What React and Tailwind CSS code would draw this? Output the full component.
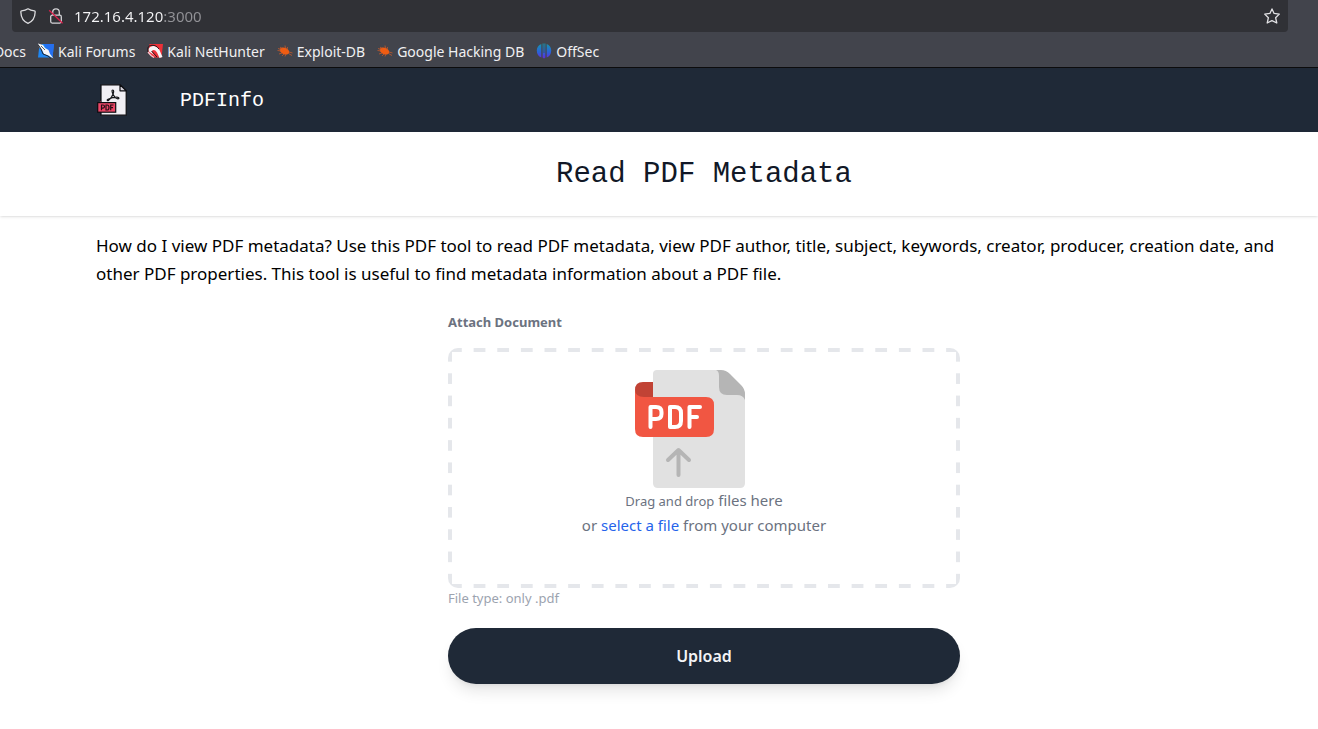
import React from "react";

function ShieldIcon() {
  return (
    <svg className="size-4" viewBox="0 0 16 16" fill="none" stroke="#dcdcdf" strokeWidth="1.3" strokeLinejoin="round">
      <path d="M8 .8C6.300 2 4 2.700 1.600 2.900C1 3 .8 3.300.8 3.800C1 9.500 3 13.500 8 15.300C13 13.500 15 9.500 15.200 3.800C15.200 3.300 15 3 14.400 2.900C12 2.700 9.700 2 8 .8Z" />
    </svg>
  );
}

function InsecureLockIcon() {
  return (
    <svg className="size-4" viewBox="0 0 16 16" fill="none">
      <rect x="2.700" y="7.200" width="10.600" height="7.900" rx="1.500" stroke="#d4d4d7" strokeWidth="1.300" />
      <path d="M4.700 7V4.200a3.300 3.300 0 0 1 6.600 0V7" stroke="#d4d4d7" strokeWidth="1.300" />
      <path d="M1.200 2.300L14.600 15.200" stroke="#d81f4a" strokeWidth="1.300" />
    </svg>
  );
}

function StarIcon() {
  return (
    <svg className="size-4" viewBox="0 0 16 16" fill="none" stroke="#e2e2e5" strokeWidth="1.300" strokeLinejoin="round">
      <path d="M8 .9L10.100 5.400L15.300 6.100L11.600 9.700L12.800 15L8 12.600L3.200 15L4.400 9.700L.7 6.100L5.900 5.400Z" />
    </svg>
  );
}

function ForumsIcon() {
  return (
    <svg className="size-4" viewBox="0 0 16 16">
      <path d="M4 1H16L14.500 14.500H0L1 6Z" fill="#1f87f2" />
      <path d="M6 1H16L14.500 14.500Z" fill="#256ff0" />
      <path d="M0 .5L5 2L7 5L10.500 7L12 11L15.500 15.500L10.500 12.500L6 11L4 7L1 4Z" fill="#f5f5f7" />
      <path d="M0 1.500L3 6L5 11L10 13L13 15.500" fill="none" stroke="#1d2530" strokeWidth="1" />
      <path d="M3 3L7 7" stroke="#33363c" strokeWidth=".8" />
    </svg>
  );
}

function NetHunterIcon() {
  return (
    <svg className="size-4" viewBox="0 0 16 16">
      <path d="M2.500 1H16L14.500 14.500H6L1 10Z" fill="#ee3038" />
      <path d="M9 13.500L2 8.500Q.5 4.500 5 3.200Q9.500 2.500 12.500 7L15.500 14L12.500 15L10 9.500Q7.500 6 5.200 7.600Q4 10 9 13.500Z" fill="#f6f4f5" />
      <path d="M1 9C0 5 1 2.500 5 2.300C8 2 10 3.500 12 6M4.500 8L10 14" fill="none" stroke="#24161b" strokeWidth="1" />
      <path d="M1 9L4 12.500L7 14.500" fill="none" stroke="#f4c6ce" strokeWidth="1.300" />
    </svg>
  );
}

function BugIcon() {
  return (
    <svg className="size-4" viewBox="0 0 16 16">
      <ellipse cx="7.500" cy="8" rx="5" ry="3.200" transform="rotate(24 7.500 8)" fill="#ef5c12" />
      <path d="M3 4L5.500 6M1 5.500L4 6.500M.5 7.500L4 8M2 11L5 10M5 13L7 11M8 13.500L9 11M8 2.500L8.500 5.500M10.500 4L10 7M12 9L15.500 10M11.500 10.500L15 12.500" stroke="#c4592b" strokeWidth=".8" />
    </svg>
  );
}

function OffSecIcon() {
  return (
    <svg className="size-4" viewBox="0 0 16 16">
      <defs>
        <linearGradient id="offsec" gradientUnits="userSpaceOnUse" x1="0" y1="0" x2="0" y2="16">
          <stop offset="0" stopColor="#159aa8" />
          <stop offset=".55" stopColor="#2864d8" />
          <stop offset="1" stopColor="#6728e0" />
        </linearGradient>
      </defs>
      <path d="M5.300 1V14.500C2.500 13.500.8 11 .8 7.500C.8 4.500 2.500 1.800 5.300 1Z" fill="url(#offsec)" />
      <path d="M10.700 1V14.500C13.500 13.500 15.200 11 15.200 7.500C15.200 4.500 13.500 1.800 10.700 1Z" fill="url(#offsec)" />
      <path d="M6.600 .5H7.600V15L6.600 14.500ZM8.400 .5H9.400V14.500L8.400 15ZM7.600 10H8.400V15.500H7.600Z" fill="url(#offsec)" />
    </svg>
  );
}

function PdfLogo() {
  return (
    <svg className="size-8" viewBox="0 0 32 32">
      <path d="M5 .8H24L30.200 7V31.200H5Z" fill="#f1eff4" stroke="#0c0d11" strokeWidth="1.200" />
      <path d="M24 .8V6.800H30.200Z" fill="#d7d4dd" stroke="#0c0d11" strokeWidth="1.200" strokeLinejoin="round" />
      <path d="M16.800 6C15.600 6 16 8 17 10.200M17 10.200C17.800 8 18 6 16.800 6M17 10.200C16.200 12.500 14.500 14.800 12.400 16.400C11.200 17.200 10.600 15.800 12 15.200C14.500 14.100 18 13.200 21 13.200C23.600 13.200 23.300 15.200 21.300 14.700C19.300 14 17.900 12.300 17 10.200Z" fill="none" stroke="#15161a" strokeWidth="1.200" />
      <path d="M5 16.800V19H2Z" fill="#a62e49" />
      <rect x="1.700" y="18.600" width="18" height="9.600" fill="#ee4667" stroke="#0c0d11" strokeWidth="1.200" />
      <path d="M5.500 26.300V21H7Q8.500 21 8.500 22.500T7 24.200H5.500M10 21V26H11.200Q13 26 13 23.500T11.200 21ZM14.700 26.300V21H17.500M14.700 23.600H17" fill="none" stroke="#260e16" strokeWidth="1.200" />
    </svg>
  );
}

function UploadPdfIcon() {
  return (
    <svg className="h-[120px] w-28" viewBox="0 -1 112 120" fill="none">
      <path d="M23 1H86L111 24V114Q111 119 106 119H24Q19 119 19 114V5Q19 1 23 1Z" fill="#e1e1e1" />
      <path d="M82 1H87Q92 1 96 5L107 16Q111 20 111 25V31Q109 26 103 26H93Q85 26 85 18V7Q85 2 82 1Z" fill="#b5b5b5" />
      <path d="M19 13H9Q1 13 1 21V31H19Z" fill="#c14335" />
      <path d="M1 20Q1 28 10 28H72Q80 28 80 36V60Q80 68 72 68H9Q1 68 1 60Z" fill="#f15642" />
      <path d="M16.500 58V38H22Q27.500 38 27.500 43V45Q27.500 50 22 50H17M36 38H41Q47 38 47 44V52Q47 58 41 58H36ZM55.500 58V38H66M56 48H63" stroke="#fff" strokeWidth="4" strokeLinecap="round" strokeLinejoin="round" />
      <path d="M44.500 106V82M34 91L44.500 81L55 91" stroke="#b5b5b5" strokeWidth="4" strokeLinecap="round" strokeLinejoin="round" />
    </svg>
  );
}

const bookmarks = [
  { label: "Kali Forums", Icon: ForumsIcon },
  { label: "Kali NetHunter", Icon: NetHunterIcon },
  { label: "Exploit-DB", Icon: BugIcon },
  { label: "Google Hacking DB", Icon: BugIcon },
  { label: "OffSec", Icon: OffSecIcon },
];

function BrowserBar() {
  return (
    <div className="border-b border-[#0c0c0d] bg-[#42444c] text-[15px]">
      <div className="mr-[30px] ml-3 flex h-8 items-center gap-3 rounded-b bg-[#303136] px-2">
        <button type="button" aria-label="Tracking protection"><ShieldIcon /></button>
        <button type="button" aria-label="Connection is not secure"><InsecureLockIcon /></button>
        <input
          type="text"
          aria-label="Address"
          defaultValue="172.16.4.120:3000"
          className="-ml-1 h-8 min-w-0 flex-1 bg-linear-to-r from-[#f6f6f8] from-[91px] to-[#929297] to-[91px] bg-clip-text pl-0.5 text-transparent outline-none"
        />
        <button type="button" aria-label="Bookmark this page"><StarIcon /></button>
      </div>
      <nav aria-label="Bookmarks" className="flex h-[35px] items-center gap-3 overflow-hidden pb-px pt-1 text-[14px] whitespace-nowrap text-[#f0f0f2]">
        <a href="#docs" className="flex w-[26px] justify-end">Docs</a>
        {bookmarks.map(({ label, Icon }) => (
          <a key={label} href="#bookmark" className="flex items-center gap-1">
            <Icon />
            {label}
          </a>
        ))}
      </nav>
    </div>
  );
}

export default function App() {
  return (
    <div className="min-h-screen bg-white font-['Noto_Sans',sans-serif] text-black">
      <BrowserBar />
      <nav className="flex h-16 items-center bg-[#1f2937] pl-24 text-white">
        <a href="#home" aria-label="PDFInfo home"><PdfLogo /></a>
        <a href="#home" className="ml-13 pt-0.5 font-['Liberation_Mono',monospace] text-xl">PDFInfo</a>
      </nav>
      <header className="bg-white pt-[25px] pr-1.5 pb-[23px] pl-24 text-center shadow">
        <h1 className="font-['Liberation_Mono',monospace] text-[29px] leading-9 text-[#111827]">Read PDF Metadata</h1>
      </header>
      <main className="py-4 pr-1.5 pl-24">
        <p className="text-[17px] leading-7">
          How do I view PDF metadata? Use this PDF tool to read PDF metadata, view PDF author, title, subject, keywords, creator, producer, creation date, and other PDF properties. This tool is useful to find metadata information about a PDF file.
        </p>
        <form className="mx-auto mt-6 max-w-lg" onSubmit={(e) => e.preventDefault()}>
          <label htmlFor="document" className="block text-[13px] leading-5 font-bold text-[#6b7280]">Attach Document</label>
          <label
            htmlFor="document"
            className="mt-4 flex h-60 flex-col items-center rounded-[10px] pt-5 text-center text-[15px] text-[#6b7280] [background-image:linear-gradient(to_right,#e5e7eb_50%,transparent_50%),linear-gradient(to_right,#e5e7eb_50%,transparent_50%),linear-gradient(#e5e7eb_50%,transparent_50%),linear-gradient(#e5e7eb_50%,transparent_50%)] [background-position:2px_0,2px_100%,0_3px,100%_3px] [background-repeat:repeat-x,repeat-x,repeat-y,repeat-y] [background-size:calc((100%_-_4px)*2/43)_4px,calc((100%_-_4px)*2/43)_4px,4px_calc((100%_-_6px)*2/21),4px_calc((100%_-_6px)*2/21)]"
          >
            <span className="mr-7 block"><UploadPdfIcon /></span>
            <span className="leading-6"><span className="text-[13px]">Drag and drop</span> files here</span>
            <span className="leading-6">or <a href="#select" className="text-[#2563eb]">select a file</a> from your computer</span>
            <input id="document" type="file" accept=".pdf" className="sr-only" />
          </label>
          <p className="text-[13px] leading-5 text-[#9ca3af]">File type: only .pdf</p>
          <button type="submit" className="mt-5 h-14 w-full rounded-full bg-[#1f2937] font-semibold text-[#f3f4f6] shadow-lg">Upload</button>
        </form>
      </main>
    </div>
  );
}
